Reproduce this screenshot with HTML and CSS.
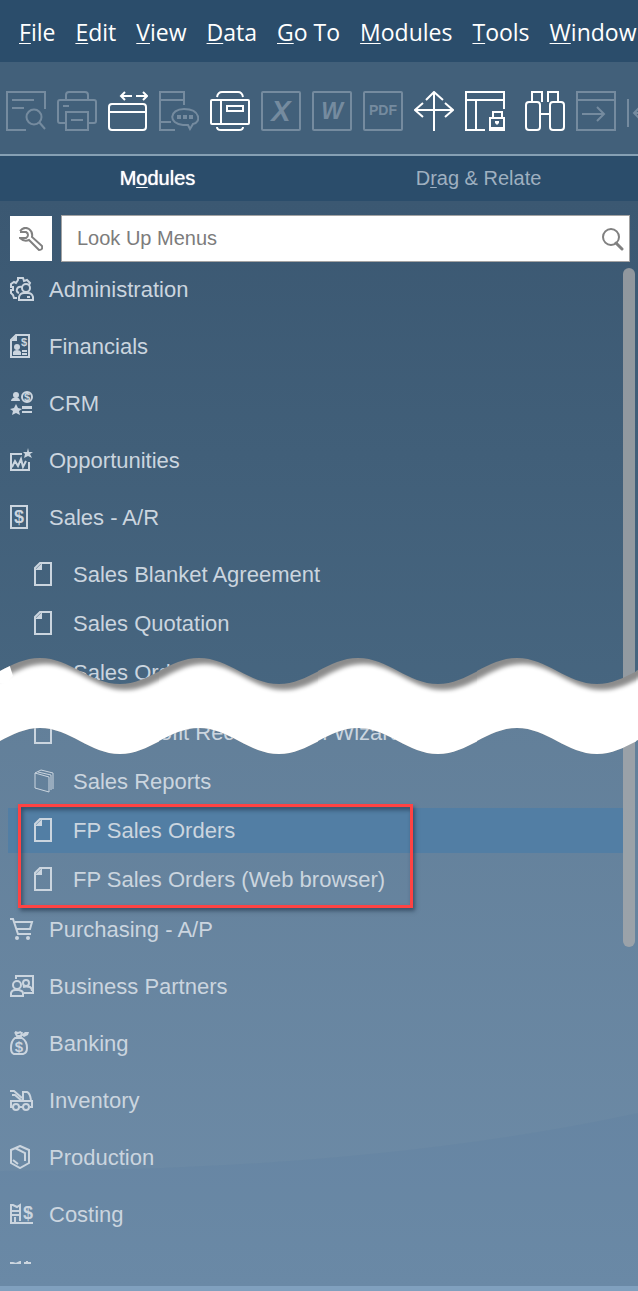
FILE: index.html
```html
<!DOCTYPE html>
<html lang="en">
<head>
<meta charset="utf-8">
<meta name="viewport" content="width=device-width, initial-scale=1">
<title>Main Menu</title>
<link rel="stylesheet" href="styles.css">
</head>
<body>
<header>
  <nav class="menubar" aria-label="Menu bar">
    <button><u>F</u>ile</button>
    <button><u>E</u>dit</button>
    <button><u>V</u>iew</button>
    <button><u>D</u>ata</button>
    <button><u>G</u>o To</button>
    <button><u>M</u>odules</button>
    <button><u>T</u>ools</button>
    <button><u>W</u>indow</button>
  </nav>
  <div class="toolbar" role="toolbar" aria-label="Tools">
    <button class="dim" aria-label="Preview"><svg class="tool" viewBox="0 0 40 40"><path d="M39 18V1H1V39H20M6 9H28M6 17H18"/><circle cx="28" cy="26" r="7.5"/><path d="M33 31L39 38"/></svg></button>
    <button class="dim" aria-label="Print"><svg class="tool" viewBox="0 0 40 40"><path d="M9 32H3Q1 32 1 30V11Q1 9 3 9H37Q39 9 39 11V30Q39 32 37 32H31M9 9V4Q9 1 12 1H28Q31 1 31 4V9M9 21H31V39H9ZM6 15H12M14 29H26"/></svg></button>
    <button aria-label="Switch window"><svg class="tool" viewBox="0 0 40 40"><rect x="1" y="13" width="37" height="26" rx="3"/><path d="M1 21H38M13 5H24M17 1L13 5L17 9M28 5H39M35 1L39 5L35 9"/></svg></button>
    <button class="dim" aria-label="Messages"><svg class="tool" viewBox="0 0 40 40"><path d="M25 14V1H1V39H16M1 9H25M1 31H12"/><path d="M24 34C9 33 10 18 25 18C42 18 42 32 34 33L31 38L29 34Z"/><path class="solid" d="M18 24h4v4h-4zM24 24h4v4h-4zM30 24h4v4h-4z"/></svg></button>
    <button aria-label="Layout"><svg class="tool" viewBox="0 0 40 40"><rect x="1" y="9" width="38" height="24" rx="1"/><path d="M11 9V33M17 15H33V20H17ZM7 6Q8 1 12 1H28Q32 1 33 6M7 36Q7 39 11 39H29Q33 39 33 36"/></svg></button>
    <button class="dim" aria-label="Export to Excel"><svg class="tool" viewBox="0 0 40 40"><rect x="1" y="1" width="38" height="38" rx="1"/><text class="glyph large" x="20" y="30">X</text></svg></button>
    <button class="dim" aria-label="Export to Word"><svg class="tool" viewBox="0 0 40 40"><rect x="1" y="1" width="38" height="38" rx="1"/><text class="glyph" x="20" y="28">W</text></svg></button>
    <button class="dim" aria-label="Export to PDF"><svg class="tool" viewBox="0 0 40 40"><rect x="1" y="1" width="38" height="38" rx="1"/><text class="glyph small" x="20" y="24">PDF</text></svg></button>
    <button aria-label="Move"><svg class="tool" viewBox="0 0 40 40"><path d="M20 40V1M12 9L20 1L29 9M1 19H39M9 12L1 19L9 26M31 12L39 19L31 26"/></svg></button>
    <button aria-label="Lock screen"><svg class="tool" viewBox="0 0 40 40"><path d="M39 18V1H1V39H20M1 9H39M11 9V39M28 27V21H37V27M25 27H39V39H25Z"/><path class="solid" d="M24 36h16v4h-16zM30 30h4v2l-2 2l-2-2z"/></svg></button>
    <button class="group" aria-label="Find"><svg class="tool" viewBox="0 0 40 40"><path d="M7 11V1H17V11M23 11V1H33V11M15 23H25"/><rect x="1" y="11" width="14" height="28" rx="3"/><rect x="25" y="11" width="14" height="28" rx="3"/></svg></button>
    <button class="dim" aria-label="Go to"><svg class="tool" viewBox="0 0 40 40"><path d="M1 1H39V39H1ZM1 9H39M6 23H27M21 16L28 23L21 30"/></svg></button>
    <button class="dim" aria-label="First record"><svg class="tool" viewBox="0 0 40 40"><path d="M1 8V36M7 22H30M14 15L7 22L14 29"/></svg></button>
  </div>
</header>
<main class="panel">
  <div class="tabs" role="tablist">
    <button class="tab active" role="tab" aria-selected="true">M<u>o</u>dules</button>
    <button class="tab" role="tab" aria-selected="false">D<u>r</u>ag &amp; Relate</button>
  </div>
  <div class="modules">
    <section class="upper">
      <form class="search" role="search">
        <button type="button" class="wrench" aria-label="Settings"><svg viewBox="0 0 24 24"><path d="M1 4Q5-1 10 2Q14 5 13 10L23 19Q24 23 20 23L10 13Q5 15 1 11H7Q9 10 9 8Q9 6 7 5H1"/></svg></button>
        <label class="lookup"><input type="search" placeholder="Look Up Menus" aria-label="Look Up Menus"><svg viewBox="0 0 24 24" aria-hidden="true"><circle cx="11" cy="10" r="8"/><path class="handle" d="M16 16L22 22"/></svg></label>
      </form>
      <ul class="menu">
        <li><a href="#"><svg class="icon" viewBox="0 0 24 24"><path d="M7 21H4L3 18L1 16V13H3V10H1V7L4 5L6 6L8 3V1H13L14 4L17 3L20 6L19 8M12 10Q8 9 7 12T9 16"/><circle cx="16" cy="11" r="4"/><path d="M9 23V20Q10 16 14 16H18Q22 16 23 20V23ZM17 20H20"/></svg>Administration</a></li>
        <li><a href="#"><svg class="icon" viewBox="0 0 24 24"><path d="M6 1H19V23H1V6Z"/><path class="solid" d="M1 7L7 1V7ZM3 21V18Q4 16 7 16T11 18V21Z"/><circle class="solid" cx="7" cy="13" r="3"/><path d="M12 17H17M12 20H17"/><text class="glyph tiny" x="14" y="12">$</text></svg>Financials</a></li>
        <li><a href="#"><svg class="icon" viewBox="0 0 24 24"><circle class="solid" cx="6" cy="4" r="3"/><path class="solid" d="M1 10Q1 7 6 6Q10 7 10 10ZM6 13L8 17L12 18L9 20L10 24L6 22L2 24L3 20L0 18L4 17ZM12 15H22V18H12ZM12 20H22V22H12Z"/><circle cx="17" cy="6" r="5"/><text class="glyph tiny" x="17" y="10">$</text></svg>CRM</a></li>
        <li><a href="#"><svg class="icon" viewBox="0 0 24 24"><path d="M12 6H1V22H19V14M2 19L5 13L8 18L11 11L13 19L16 13"/><path class="solid" d="M18 0L19 4L23 4L20 6L22 10L18 8L14 10L15 6L13 4L17 4Z"/></svg>Opportunities</a></li>
        <li><a href="#"><svg class="icon" viewBox="0 0 24 24"><path d="M1 1H17V23H1Z"/><text class="glyph big" x="9" y="18">$</text></svg>Sales - A/R</a>
          <ul class="submenu">
            <li><a href="#"><svg class="icon" viewBox="0 0 24 24"><path d="M6 1H17V23H1V6Z"/><path class="solid" d="M1 8L8 1V8Z"/></svg>Sales Blanket Agreement</a></li>
            <li><a href="#"><svg class="icon" viewBox="0 0 24 24"><path d="M6 1H17V23H1V6Z"/><path class="solid" d="M1 8L8 1V8Z"/></svg>Sales Quotation</a></li>
            <li><a href="#"><svg class="icon" viewBox="0 0 24 24"><path d="M6 1H17V23H1V6Z"/><path class="solid" d="M1 8L8 1V8Z"/></svg>Sales Order</a></li>
          </ul>
        </li>
      </ul>
    </section>
    <section class="lower">
      <svg class="swoosh" viewBox="0 0 638 173" preserveAspectRatio="none" aria-hidden="true"><path d="M0 58Q370 58 638 0V173H0Z"/></svg>
      <svg class="tear" aria-hidden="true">
        <defs>
          <filter id="soft"><feGaussianBlur stdDeviation="2"/></filter>
          <clipPath id="band"><path d="M-200 27C-170 27-150 1-120 1S-70 27-40 27S10 1 40 1S90 27 120 27S170 1 200 1S250 27 280 27S330 1 360 1V71C330 71 310 97 280 97S230 71 200 71S150 97 120 97S70 71 40 71S-10 97-40 97S-90 71-120 71S-170 97-200 97Z"/></clipPath>
          <pattern id="waves" width="159" height="100" patternUnits="userSpaceOnUse">
            <g clip-path="url(#band)">
              <rect class="shade" x="-10" width="180" height="100"/>
              <path class="paper" filter="url(#soft)" d="M-195 33C-165 33-145 7-115 7S-65 33-35 33S15 7 45 7S95 33 125 33S175 7 205 7S255 33 285 33V120H-195Z"/>
            </g>
          </pattern>
        </defs>
        <rect width="100%" height="100" fill="url(#waves)"/>
        <path class="paper" clip-path="url(#band)" d="M0 0H7L13 19L6 26H0Z"/>
      </svg>
      <ul class="menu">
        <li>
          <ul class="submenu">
            <li><a href="#"><svg class="icon" viewBox="0 0 24 24"><path d="M6 1H17V23H1V6Z"/><path class="solid" d="M1 8L8 1V8Z"/></svg>Gross Profit Recalculation Wizard</a></li>
            <li><a href="#"><svg class="icon thin" viewBox="0 0 24 24"><path d="M1 4L15 8V23L1 19ZM1 4L7 1L19 4V20M4 3L17 6V21"/></svg>Sales Reports</a></li>
            <li class="marked"><a class="selected" href="#"><svg class="icon" viewBox="0 0 24 24"><path d="M6 1H17V23H1V6Z"/><path class="solid" d="M1 8L8 1V8Z"/></svg>FP Sales Orders</a></li>
            <li><a href="#"><svg class="icon" viewBox="0 0 24 24"><path d="M6 1H17V23H1V6Z"/><path class="solid" d="M1 8L8 1V8Z"/></svg>FP Sales Orders (Web browser)</a></li>
          </ul>
        </li>
        <li><a href="#"><svg class="icon" viewBox="0 0 24 24"><path d="M0 2H3L8 17H21M5 5H22L20 12H7"/><circle class="solid" cx="7" cy="21" r="2"/><circle class="solid" cx="18" cy="21" r="2"/></svg>Purchasing - A/P</a></li>
        <li><a href="#"><svg class="icon" viewBox="0 0 24 24"><path d="M6 5V2H23V19H14M1 22V19Q2 16 5 16H9Q13 17 13 19V22ZM13 13Q16 12 20 13Q22 14 22 17"/><circle cx="7" cy="11" r="4"/><circle cx="16" cy="9" r="3"/></svg>Business Partners</a></li>
        <li><a href="#"><svg class="icon" viewBox="0 0 24 24"><path d="M5 7Q1 10 1 17Q1 22 4 23H13Q17 22 17 17Q17 10 12 7ZM5 1L7 5H11L12 1M5 1L8 2L11 1"/><path class="solid" d="M11 4L15 1H19L18 4L14 6Z"/><text class="glyph mid" x="9" y="21">$</text></svg>Banking</a></li>
        <li><a href="#"><svg class="icon" viewBox="0 0 24 24"><path d="M3 19H1V13H22V19H20M9 19H13M2 7H5L12 13M0 3H4L12 10M13 12V4H17Q20 5 21 12"/><circle cx="6" cy="19" r="3"/><circle cx="16" cy="19" r="3"/></svg>Inventory</a></li>
        <li><a href="#"><svg class="icon" viewBox="0 0 24 24"><path d="M10 1L19 5V18L10 23L1 18V5ZM5 3L15 8V16M3 15L8 19"/></svg>Production</a></li>
        <li><a href="#"><svg class="icon" viewBox="0 0 24 24"><path d="M1 21V3H3L7 5L10 3V19M1 9H10M1 13H10M5 21V15M0 21H23"/><text class="glyph big" x="18" y="17">$</text></svg>Costing</a></li>
        <li class="cut"><svg class="icon" viewBox="0 0 24 24" aria-hidden="true"><path d="M0 2H3L6 3L10 1V20M1 2V20M14 2H21M17 0V20"/></svg></li>
      </ul>
    </section>
    <div class="thumb"></div>
  </div>
</main>
</body>
</html>
```
FILE: styles.css
```css
*, *::after { box-sizing: border-box; }
body {
  margin: 0;
  min-height: 100vh;
  background: #80a0be;
  color: #ffffff;
  font-family: "Liberation Sans", Arial, sans-serif;
  overflow-x: hidden;
}
button {
  padding: 0;
  border: 0;
  background: none;
  color: inherit;
  font: inherit;
}
svg { display: block; fill: none; stroke: currentColor; stroke-width: 2; }
u { text-decoration-thickness: 1px; text-underline-offset: 2px; text-decoration-skip-ink: none; }
ul { margin: 0; padding: 0; list-style: none; }

.menubar {
  display: flex;
  gap: 20px;
  height: 62px;
  padding: 2px 0 0 19px;
  overflow: hidden;
  background: #2b4d6b;
  font-family: "Open Sans", "Noto Sans", sans-serif;
  font-size: 23px;
  white-space: nowrap;
}
.menubar button { flex: none; }

.toolbar {
  display: flex;
  gap: 11px;
  height: 94px;
  padding: 29px 0 0 6px;
  overflow: hidden;
  background: #42607a;
  border-bottom: 2px solid #86a0b4;
}
.toolbar button { flex: none; height: 40px; }
.toolbar .group { margin-left: 9px; }
.toolbar .dim { color: #758b9f; }
.tool { width: 40px; height: 40px; }

.solid { fill: currentColor; stroke: none; }
.glyph {
  fill: currentColor;
  stroke: none;
  font: italic bold 23px "Liberation Sans", Arial, sans-serif;
  text-anchor: middle;
}
.glyph.large { font-size: 29px; }
.glyph.small { font-size: 14px; font-style: normal; }
.glyph.tiny { font-size: 11px; font-style: normal; }
.glyph.mid { font-size: 15px; font-style: normal; }
.glyph.big { font-size: 18px; font-style: normal; }

.tabs {
  display: grid;
  grid-template-columns: 1fr 1fr;
  height: 45px;
  background: #2b4d6b;
}
.tab { font-size: 20px; color: #9fb0c0; }
.tab.active { color: #ffffff; text-shadow: 0 0 1px #ffffff; }
.tab.active { margin-right: 4px; }

.modules { position: relative; background: #6c8aa5; }
.upper { background: linear-gradient(#3b5872, #476680); }
.lower {
  position: relative;
  padding: 5px 0 22px;
  background: linear-gradient(#627f99, #6e8ca8);
}

.search { display: flex; gap: 9px; padding: 14px 8px 0 10px; }
.wrench {
  display: grid;
  place-items: center;
  width: 42px;
  margin: 1px 0;
  background: #ffffff;
  color: #808080;
}
.wrench svg { width: 24px; height: 24px; }
.lookup {
  display: flex;
  flex: 1;
  align-items: center;
  height: 47px;
  padding: 0 5px 0 15px;
  border: 1px solid #a3a3a3;
  background: #ffffff;
  color: #808080;
}
.lookup input {
  flex: 1;
  min-width: 0;
  padding: 0;
  border: 0;
  outline: 0;
  background: none;
  color: #444444;
  font: inherit;
  font-size: 20px;
}
.lookup input::placeholder { color: #7c7c7c; opacity: 1; }
.lookup svg { width: 24px; height: 24px; }
.handle { stroke-width: 3; stroke-linecap: round; }

.menu { position: relative; color: #cbd5df; font-size: 22px; white-space: nowrap; }
.menu a {
  display: flex;
  align-items: center;
  gap: 15px;
  height: 55px;
  margin: 0 0 2px 8px;
  padding-left: 2px;
  color: inherit;
  text-decoration: none;
}
.icon { flex: none; width: 24px; height: 24px; margin-bottom: 2px; }
.submenu { padding-top: 5px; margin-bottom: -4px; }
.upper .submenu { margin-bottom: 0; padding-bottom: 6px; }
.lower .submenu { padding-top: 0; }
.submenu a { height: 45px; margin: 0 15px 4px 8px; padding-left: 26px; }
.submenu .selected { background: #527ea4; }
.marked { position: relative; }
.marked::after {
  content: "";
  position: absolute;
  z-index: 1;
  top: -4px;
  left: 18px;
  width: 395px;
  height: 104px;
  border: 3px solid #ff4343;
  box-shadow: 2px 3px 4px rgba(30, 50, 70, 0.6), inset 2px 3px 4px rgba(30, 50, 70, 0.6);
  pointer-events: none;
}
.thin { stroke-width: 1; }
.cut { height: 20px; padding: 17px 0 0 10px; overflow: hidden; }

.tear {
  position: absolute;
  z-index: 2;
  top: -48px;
  left: 0;
  width: 100%;
  height: 100px;
  stroke: none;
}
.shade { fill: #8c8c8c; }
.paper { fill: #ffffff; }

.thumb {
  position: absolute;
  z-index: 1;
  top: 67px;
  right: 3px;
  bottom: 339px;
  width: 12px;
  border-radius: 6px;
  background: rgba(172, 172, 172, 0.75);
}
.swoosh {
  position: absolute;
  left: 0;
  bottom: 0;
  width: 100%;
  height: 173px;
  stroke: none;
  fill: rgba(90, 125, 160, 0.2);
  pointer-events: none;
}
```
